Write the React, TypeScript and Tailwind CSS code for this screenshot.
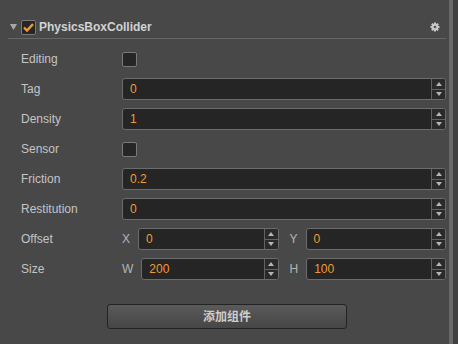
import React from 'react';

const Spinner: React.FC = () => (
  <div className="flex w-[14px] flex-col border-l border-[#626262] bg-[#2a2a2a]">
    <div className="flex flex-1 items-center justify-center border-b border-[#626262]">
      <svg width="6" height="4" viewBox="0 0 6 4">
        <path d="M0 4 L3 0 L6 4 Z" fill="#b5b5b5" />
      </svg>
    </div>
    <div className="flex flex-1 items-center justify-center">
      <svg width="6" height="4" viewBox="0 0 6 4">
        <path d="M0 0 L6 0 L3 4 Z" fill="#b5b5b5" />
      </svg>
    </div>
  </div>
);

const NumberInput: React.FC<{ value: string }> = ({ value }) => (
  <div className="flex h-[22px] min-w-0 flex-1 overflow-hidden rounded-[3px] border border-[#6c6c6c] bg-[#252525]">
    <div className="flex flex-1 items-center pl-[7px] text-[12px] text-[#f09a36]">{value}</div>
    <Spinner />
  </div>
);

const CheckBox: React.FC = () => (
  <div className="h-[15px] w-[15px] rounded-[2px] border border-[#7a7a7a] bg-[#262626]" />
);

const Row: React.FC<{ label: string; children: React.ReactNode }> = ({ label, children }) => (
  <div className="flex h-[30px] items-center pl-[13px]">
    <div className="w-[101px] text-[12px] text-[#c4c4c4]">{label}</div>
    <div className="flex flex-1 items-center">{children}</div>
  </div>
);

const Pair: React.FC<{ a: string; av: string; b: string; bv: string }> = ({ a, av, b, bv }) => (
  <div className="grid flex-1 grid-cols-2 gap-x-[11px]">
    <div className="flex items-center gap-2">
      <span className="text-[12px] text-[#b4b4b4]">{a}</span>
      <NumberInput value={av} />
    </div>
    <div className="flex items-center gap-2">
      <span className="text-[12px] text-[#b4b4b4]">{b}</span>
      <NumberInput value={bv} />
    </div>
  </div>
);

const Gear: React.FC = () => (
  <svg width="10" height="10" viewBox="0 0 10 10">
    <g fill="#c8c8c8">
      {[0, 45, 90, 135].map((r) => (
        <rect key={r} x="4" y="0.5" width="2" height="9" transform={`rotate(${r} 5 5)`} />
      ))}
      <circle cx="5" cy="5" r="3.4" />
    </g>
    <circle cx="5" cy="5" r="1.3" fill="#555" />
  </svg>
);

const App: React.FC = () => {
  return (
    <div className="flex h-[344px] w-[458px] bg-[#484848] font-['Liberation_Sans','Noto_Sans_CJK_SC',sans-serif]">
      <div className="flex flex-1 flex-col pl-2 pr-[3px] pt-[19px]">
        {/* Header */}
        <div className="flex h-[16px] items-center">
          <svg width="7" height="6" viewBox="0 0 7 6" className="ml-[2px]">
            <path d="M0 0 L7 0 L3.5 6 Z" fill="#a8a8a8" />
          </svg>
          <div className="ml-[4px] flex h-[15px] w-[15px] items-center justify-center rounded-[2px] border border-[#7a7a7a] bg-[#262626]">
            <svg width="11" height="9" viewBox="0 0 11 9">
              <path d="M1 4.5 L4 7.5 L10 1.2" fill="none" stroke="#f39a2c" strokeWidth="2.4" />
            </svg>
          </div>
          <span className="ml-[3px] text-[12px] font-bold text-[#d2d2d2]">PhysicsBoxCollider</span>
          <div className="ml-auto mr-[6px] flex items-center">
            <Gear />
          </div>
        </div>
        <div className="mt-[3px] h-px bg-[#666666]" />

        <div className="mt-[5px] flex flex-col">
          <Row label="Editing">
            <CheckBox />
          </Row>
          <Row label="Tag">
            <NumberInput value="0" />
          </Row>
          <Row label="Density">
            <NumberInput value="1" />
          </Row>
          <Row label="Sensor">
            <CheckBox />
          </Row>
          <Row label="Friction">
            <NumberInput value="0.2" />
          </Row>
          <Row label="Restitution">
            <NumberInput value="0" />
          </Row>
          <Row label="Offset">
            <Pair a="X" av="0" b="Y" bv="0" />
          </Row>
          <Row label="Size">
            <Pair a="W" av="200" b="H" bv="100" />
          </Row>
        </div>

        <button className="mx-auto mt-[20px] h-[25px] w-[240px] rounded-[3px] border border-[#232323] bg-gradient-to-b from-[#5a5a5a] to-[#464646] text-[12px] font-bold text-[#cdcdcd]">
          添加组件
        </button>
      </div>

      {/* Scrollbar */}
      <div className="flex w-[9px]">
        <div className="w-[4px] bg-[#6a6a6a]" />
        <div className="flex-1 bg-[#414141]" />
      </div>
    </div>
  );
};

export default App;
